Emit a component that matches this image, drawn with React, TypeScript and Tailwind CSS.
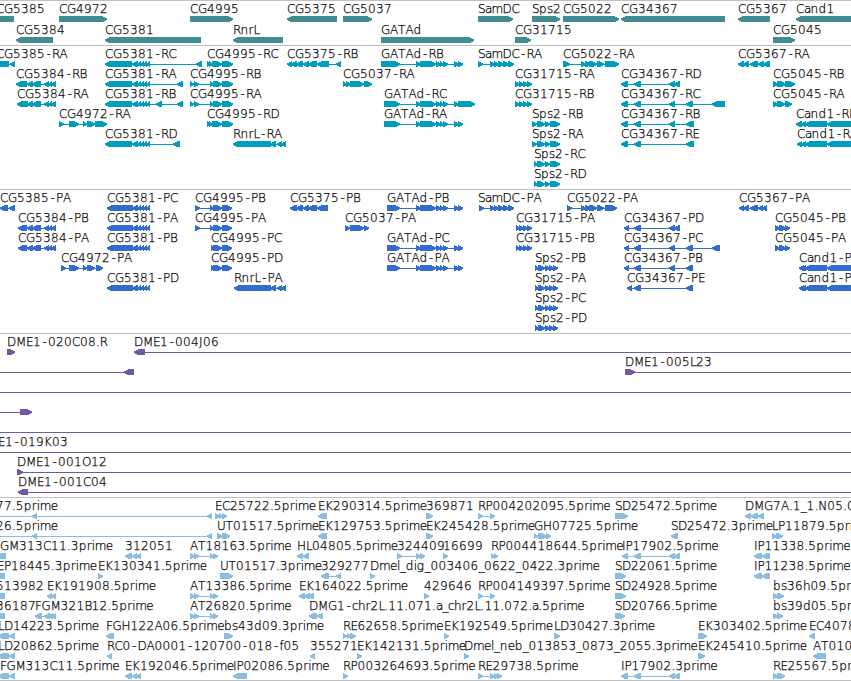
import React from 'react';

type Span = [number, number];

interface Feature {
  name?: string;
  x?: number;
  dir: 'l' | 'r';
  spans: Span[];
  line?: Span;
}

// Glyph advances of the label face at 12px
const ADVANCE: Record<string, number> = {
  A: 8, B: 7, C: 8, D: 9, E: 7, F: 6.5, G: 9, H: 9, I: 3.5, J: 4, K: 8, L: 6,
  M: 10, N: 9, O: 9, P: 7, R: 7.5, S: 7, T: 7.5, U: 8.5,
  a: 6.5, b: 8, c: 6, d: 8, e: 7, f: 4, g: 8, h: 7.5, i: 3, l: 3, m: 11, n: 8,
  p: 8, r: 5, s: 6, '-': 7, '_': 5.7, '.': 3.8,
};

const glyphPositions = (name: string, start: number) => {
  let x = start;
  return name.split('').map((ch) => {
    const at = ch === '-' ? x + 1.5 : x;
    x += ADVANCE[ch] ?? 8;
    return at;
  }).join(' ');
};

const left = (name: string, spans: Span[], x?: number, line?: Span): Feature => ({ name, dir: 'l', spans, x, line });
const right = (name: string, spans: Span[], x?: number, line?: Span): Feature => ({ name, dir: 'r', spans, x, line });
const bare = (line: Span): Feature => ({ dir: 'l', spans: [], line });

// Exon groups shared by several transcripts
const tail5381: Span[] = [[132, 138], [137, 141], [140, 144], [143, 147], [146, 150]];
const r5381: Span[] = [[105, 132], ...tail5381];
const p5381: Span[] = [[107, 133], ...tail5381];
const tail5384: Span[] = [[27, 33], [32, 41], [44, 49], [48, 52], [51, 56]];
const r4995: Span[] = [[190, 194], [194, 199], [210, 214], [213, 222], [222, 233]];
const r4995c: Span[] = [[207, 211], [209, 213], [212, 222], [222, 233]];
const p4995: Span[] = [[195, 200], [210, 214], [213, 222], [222, 232]];
const p4995c: Span[] = [[211, 215], [213, 222], [222, 232]];
const gataMid: Span[] = [[416, 421], [420, 436], [436, 441], [440, 444], [443, 448], [454, 459]];
const r31715: Span[] = [[515, 520], [519, 524], [523, 528], [527, 532]];
const p31715: Span[] = [[516, 520], [519, 524], [523, 528], [527, 532]];
const sps: Span[] = [[532, 537], [537, 545], [545, 550], [550, 560]];
const spsShort: Span[] = [[534, 538], [537, 545], [545, 550], [550, 560]];
const spsP: Span[] = [[535, 539], [538, 545], [545, 550], [549, 554], [553, 558]];
const samdc: Span[] = [[490, 495], [494, 499], [498, 504], [503, 509], [508, 514]];
const mid5022: Span[] = [[581, 586], [585, 591], [589, 597], [597, 604]];
const cand: Span[] = [[801, 806], [805, 827], [827, 860]];
const ip17902: Span[] = [[621, 628], [634, 641], [669, 675], [674, 680]];
const rp: Span[] = [[478, 483], [490, 495]];
const at: Span[] = [[190, 195], [194, 199], [210, 214], [213, 218]];

const GENES: Feature[][] = [
  [
    left('CG5385', [[-4, 14]]), right('CG4972', [[59, 107]]), right('CG4995', [[190, 233]]),
    left('CG5375', [[287, 337]]), right('CG5037', [[343, 372]]), right('SamDC', [[478, 513]]),
    right('Sps2', [[532, 560]]), right('CG5022', [[563, 619]]), left('CG34367', [[621, 725]]),
    left('CG5367', [[738, 770]]), left('Cand1', [[796, 860]]),
  ],
  [
    left('CG5384', [[16, 53]]), left('CG5381', [[105, 201]]), left('RnrL', [[233, 283]]),
    right('GATAd', [[381, 474]]), right('CG31715', [[515, 531]]), right('CG5045', [[773, 795]]),
  ],
];

const TRANSCRIPTS: Feature[][] = [
  [
    left('CG5385-RA', [[-4, 9], [10, 15]]),
    left('CG5381-RC', [...r5381, [196, 202]]),
    right('CG4995-RC', r4995c),
    left('CG5375-RB', [[287, 292], [291, 297], [296, 303], [303, 309], [308, 317], [317, 329], [336, 341]]),
    right('GATAd-RB', [[381, 400], ...gataMid, [458, 463]]),
    right('SamDC-RA', [[478, 483], ...samdc]),
    right('CG5022-RA', [[563, 570], ...mid5022, [605, 619]]),
    left('CG5367-RA', [[738, 744], [743, 749], [750, 758], [758, 764], [763, 770]]),
  ],
  [
    left('CG5384-RB', [[16, 27], ...tail5384]),
    left('CG5381-RA', [...r5381, [177, 183]]),
    right('CG4995-RB', r4995),
    right('CG5037-RA', [[343, 347], [346, 351], [350, 364], [364, 372]]),
    right('CG31715-RA', r31715),
    left('CG34367-RD', ip17902),
    right('CG5045-RB', [[773, 778], [777, 786], [785, 795]]),
  ],
  [
    left('CG5384-RA', [[17, 28], ...tail5384]),
    left('CG5381-RB', [...r5381, [156, 162], [177, 183]]),
    right('CG4995-RA', r4995),
    right('GATAd-RC', [[384, 400], ...gataMid, [458, 475]]),
    right('CG31715-RB', r31715),
    left('CG34367-RC', [[621, 628], [634, 641], [669, 675], [686, 693], [712, 725]]),
    right('CG5045-RA', [[773, 778], [777, 785], [785, 792]]),
  ],
  [
    right('CG4972-RA', [[59, 64], [69, 79], [83, 87], [87, 95], [95, 107]]),
    right('CG4995-RD', r4995c),
    right('GATAd-RA', [[384, 400], ...gataMid, [458, 463]]),
    right('Sps2-RB', sps),
    left('CG34367-RB', [[621, 628], [634, 641], [669, 675], [686, 694]]),
    left('Cand1-RB', [[796, 802], ...cand]),
  ],
  [
    left('CG5381-RD', [...r5381, [173, 180]]),
    left('RnrL-RA', [[233, 271], [270, 276], [277, 282], [281, 286]]),
    right('Sps2-RA', sps),
    left('CG34367-RE', [[621, 628], [634, 641], [686, 694]]),
    left('Cand1-RA', [[797, 802], ...cand]),
  ],
  [right('Sps2-RC', spsShort)],
  [right('Sps2-RD', spsShort)],
];

const PROTEINS: Feature[][] = [
  [
    left('CG5385-PA', [[0, 8], [9, 15]]),
    left('CG5381-PC', p5381),
    right('CG4995-PB', p4995),
    left('CG5375-PB', [[290, 297], [296, 303], [303, 309], [308, 317], [317, 328]]),
    right('GATAd-PB', [[387, 400], ...gataMid, [458, 463]]),
    right('SamDC-PA', [[479, 484], ...samdc], 478),
    right('CG5022-PA', [[567, 572], ...mid5022, [605, 617]]),
    left('CG5367-PA', [[739, 744], [743, 749], [750, 758], [758, 763], [762, 767]]),
  ],
  [
    left('CG5384-PB', [[18, 27], ...tail5384]),
    left('CG5381-PA', p5381),
    right('CG4995-PA', p4995),
    right('CG5037-PA', [[345, 350], [350, 364], [364, 369]]),
    right('CG31715-PA', p31715),
    left('CG34367-PD', [[624, 629], [634, 641], [669, 675], [674, 680]]),
    right('CG5045-PB', [[775, 780], [779, 786], [785, 790]]),
  ],
  [
    left('CG5384-PA', [[18, 27], ...tail5384]),
    left('CG5381-PB', p5381),
    right('CG4995-PC', p4995c),
    right('GATAd-PC', [[387, 400], ...gataMid, [458, 463]]),
    right('CG31715-PB', p31715),
    left('CG34367-PC', [[624, 629], [634, 641], [669, 675], [686, 693], [712, 720]]),
    right('CG5045-PA', [[775, 780], [779, 786], [785, 790]]),
  ],
  [
    right('CG4972-PA', [[61, 66], [69, 79], [83, 87], [87, 95], [96, 103]]),
    right('CG4995-PD', p4995c),
    right('GATAd-PA', [[387, 400], ...gataMid, [458, 463]]),
    right('Sps2-PB', spsP),
    left('CG34367-PB', [[624, 629], [634, 641], [669, 675], [686, 693]]),
    left('Cand1-PB', [[799, 804], ...cand]),
  ],
  [
    left('CG5381-PD', p5381),
    left('RnrL-PA', [[234, 271], [270, 276], [277, 282], [281, 286]]),
    right('Sps2-PA', spsP),
    left('CG34367-PE', [[627, 632], [634, 641], [686, 693]]),
    left('Cand1-PA', [[799, 804], ...cand]),
  ],
  [right('Sps2-PC', spsP)],
  [right('Sps2-PD', spsP)],
];

const CLONES: Feature[][] = [
  [right('DME1-020C08.R', [[7, 15]]), left('DME1-004J06', [[134, 145]], 134, [140, 860])],
  [{ dir: 'l', spans: [[124, 134]], line: [-5, 130] }, right('DME1-005L23', [[625, 635]], 625, [630, 860])],
  [bare([-5, 860])],
  [{ dir: 'r', spans: [[20, 32]], line: [-5, 24] }],
  [bare([-5, 860])],
  [{ name: 'DME1-019K03', x: -21, dir: 'l', spans: [], line: [-5, 860] }],
  [right('DME1-001O12', [[17, 23]], 17, [18, 860])],
  [left('DME1-001C04', [[18, 28]], 18, [22, 860])],
];

const ESTS: Feature[][] = [
  [
    left('77.5prime', [[32, 37], [207, 212]], -4, [-5, 212]),
    right('EC25722.5prime', [[215, 220], [219, 223], [222, 227]]),
    left('EK290314.5prime', [[318, 327]]),
    right('369871', [[426, 433]]),
    right('RP004202095.5prime', rp),
    right('SD25472.5prime', [[615, 628]]),
    left('DMG7A.1_1.N05.0', [[745, 751], [751, 758], [758, 764]]),
  ],
  [
    left('26.5prime', [[32, 37], [207, 212]], -4, [-5, 212]),
    right('UT01517.5prime', [[217, 223], [222, 230]]),
    left('EK129753.5prime', [[318, 327]]),
    right('EK245428.5prime', [[426, 433]]),
    right('GH07725.5prime', [[534, 538], [538, 547], [546, 551]]),
    left('SD25472.3prime', [[671, 678]]),
    right('LP11879.5prime', [[772, 777], [776, 783]]),
  ],
  [
    left('GM313C11.3prime', [[-8, 6]], 0),
    left('312051', [[125, 132], [132, 137], [136, 141]]),
    right('AT18163.5prime', at),
    left('HL04805.5prime', [[297, 303], [303, 309]]),
    right('324409', [[397, 402], [416, 421], [420, 425]]),
    right('16699', [[443, 448]]),
    right('RP004418644.5prime', [[491, 495], [494, 498]]),
    left('IP17902.5prime', [[622, 628], [634, 641], [669, 675], [674, 680]]),
    left('IP11338.5prime', [[754, 762], [762, 770]]),
  ],
  [
    left('EP18445.3prime', [[-5, 5]], -3),
    right('EK130341.5prime', [[98, 103]]),
    right('UT01517.3prime', [[220, 233]]),
    left('329277', [[321, 329], [336, 341]]),
    right('Dmel_dig_003406_0622_0422.3prime', [[370, 375]]),
    right('SD22061.5prime', [[615, 626]]),
    left('IP11238.5prime', [[754, 762], [762, 770]]),
  ],
  [
    left('513982', [[-5, 5]], -4),
    left('EK191908.5prime', [[47, 52], [51, 56]]),
    right('AT13386.5prime', at),
    left('EK164022.5prime', [[299, 305], [304, 310], [308, 314]]),
    right('429646', [[424, 429]]),
    right('RP004149397.5prime', rp),
    right('SD24928.5prime', [[615, 626]]),
    right('bs36h09.5prime', [[773, 778], [777, 784]]),
  ],
  [
    left('36187', [[-5, 5]], -4),
    left('FGM321B12.5prime', [[35, 42], [44, 50], [48, 53], [51, 56]]),
    right('AT26820.5prime', at),
    left('DMG1-chr2L.11.071.a_chr2L.11.072.a.5prime', [[309, 317], [317, 323]]),
    right('SD20766.5prime', [[615, 625]]),
    right('bs39d05.5prime', [[773, 778], [777, 783]]),
  ],
  [
    left('LD14223.5prime', [[-2, 9], [9, 15]]),
    left('FGH122A06.5prime', [[106, 114]]),
    right('bs43d09.3prime', [[224, 233]]),
    right('RE62658.5prime', [[343, 347], [347, 351], [350, 356]]),
    right('EK192549.5prime', [[444, 449]]),
    right('LD30427.3prime', [[554, 560]]),
    right('EK303402.5prime', [[698, 707]]),
    left('EC4078', [[809, 815]]),
  ],
  [
    left('LD20862.5prime', [[-2, 9], [9, 15]]),
    left('RC0-DA0001-120700-018-f05', [[107, 112]]),
    left('355271', [[310, 315]]),
    right('EK142131.5prime', [[357, 362]]),
    right('Dmel_neb_013853_0873_2055.3prime', [[464, 469]]),
    right('EK245410.5prime', [[698, 705]]),
    left('AT010', [[813, 826]]),
  ],
  [
    left('FGM313C11.5prime', [[-2, 9], [9, 15]], 0),
    left('EK192046.5prime', [[125, 132], [132, 137], [136, 141]]),
    left('IP02086.5prime', [[233, 247]]),
    right('RP003264693.5prime', [[343, 348]]),
    right('RE29738.5prime', [[478, 483], [490, 495], [494, 499], [497, 502]]),
    left('IP17902.3prime', ip17902),
    right('RE25567.5prime', [[773, 778], [777, 785]]),
  ],
];

const arrow = ([a, b]: Span, dir: 'l' | 'r') => {
  const head = Math.min(b - a, 5);
  const tip = dir === 'l' ? a : b;
  const back = dir === 'l' ? b : a;
  const step = dir === 'l' ? 1 : -1;
  return [
    [tip, 17.5], [tip + step * 2, 16.4], [tip + step * head, 15], [back, 15],
    [back, 21], [tip + step * head, 21], [tip + step * 2, 20.2], [tip, 19],
  ].map((p) => p.join(',')).join(' ');
};

const Glyph = ({ feature }: { feature: Feature }) => {
  const { name, dir, spans } = feature;
  const line = feature.line ?? [spans[0][0] + 1, spans[spans.length - 1][1] - 1];
  const start = feature.x ?? spans[0]?.[0] ?? 0;
  return (
    <g>
      <rect x={line[0]} y={18} width={line[1] - line[0]} height={1} />
      {spans.map((span, i) => (
        <polygon key={i} points={arrow(span, dir)} shapeRendering="crispEdges" />
      ))}
      {name && (
        <text x={glyphPositions(name, start)} y={12} className="fill-black stroke-black stroke-[0.25px]">
          {name}
        </text>
      )}
    </g>
  );
};

const Track = ({ rows, className, rowClass = 'h-5' }: { rows: Feature[][]; className: string; rowClass?: string }) => (
  <section className={`shrink-0 border-t border-[#c0c0c0] ${className}`}>
    {rows.map((features, i) => (
      <div key={i} className={rowClass}>
        <svg className="block h-full w-full overflow-visible">
          {features.map((feature, j) => (
            <Glyph key={j} feature={feature} />
          ))}
        </svg>
      </div>
    ))}
  </section>
);

const App = () => {
  return (
    <main className="flex h-[681px] w-[851px] flex-col overflow-hidden border-b border-[#c0c0c0] bg-white font-['DejaVu_Sans',sans-serif] text-[12px] font-extralight">
      <Track rows={GENES} className="h-[45px] fill-[#408c91]" rowClass="h-[21px]" />
      <Track rows={TRANSCRIPTS} className="h-36 fill-[#009dbf]" />
      <Track rows={PROTEINS} className="h-36 fill-[#306dcf]" />
      <Track rows={CLONES} className="h-[164px] fill-[#7357a8]" />
      <Track rows={ESTS} className="h-[183px] fill-[#8abde0]" />
    </main>
  );
};

export default App;
